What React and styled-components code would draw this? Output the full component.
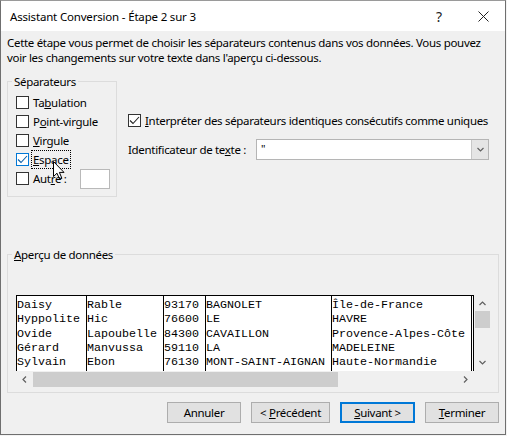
import React from 'react';
import styled, { createGlobalStyle } from 'styled-components';

const Global = createGlobalStyle`
  html, body { margin: 0; padding: 0; background: #f3f3f3; }
  body { font-family: "Noto Sans", "Liberation Sans", sans-serif; font-size: 11.5px; letter-spacing: -0.31px; color: #000; }
  * { box-sizing: border-box; }
`;

const Window = styled.div`
  width: 506px;
  height: 435px;
  border: 1px solid #6f6f6f;
  border-top-color: #9a9a9a;
  display: flex;
  flex-direction: column;
  background: #f0f0f0;
`;

const TitleBar = styled.div`
  height: 30px;
  background: #fff;
  display: flex;
  align-items: center;
  padding-left: 9px;
`;

const Title = styled.div`
  flex: 1;
  line-height: 15px;
  letter-spacing: -0.18px;
`;

const TitleButton = styled.div`
  width: 44px;
  height: 30px;
  display: flex;
  align-items: center;
  justify-content: center;
  font-size: 14px;
  color: #222;
`;

const Body = styled.div`
  flex: 1;
  display: flex;
  flex-direction: column;
  padding: 4px 6px 0 6px;
`;

const Description = styled.p`
  margin: 0;
  line-height: 15px;
`;

const Middle = styled.div`
  display: flex;
  align-items: flex-start;
  margin-top: 9px;
`;

const Group = styled.fieldset`
  margin: 0;
  border: 1px solid #dcdcdc;
  padding: ${p => p.$pad};
  width: ${p => p.$width};
  flex: none;
  min-width: 0;
`;

const Legend = styled.legend`
  padding: 0 2px;
  line-height: 15px;
`;

const CheckList = styled.div`
  display: flex;
  flex-direction: column;
  margin-left: 4px;
`;

const CheckRow = styled.label`
  position: relative;
  display: flex;
  align-items: center;
  height: 19px;
  gap: 4px;
`;

const Box = styled.span`
  width: 13px;
  height: 13px;
  border: 1px solid ${p => (p.$hot ? '#0078d7' : '#333')};
  background: #fff;
  display: flex;
  align-items: center;
  justify-content: center;
  flex: none;
`;

const Label = styled.span`
  line-height: 15px;
  white-space: nowrap;
  outline: ${p => (p.$focus ? '1px dotted #000' : 'none')};
  outline-offset: 1px;
`;

const SmallInput = styled.span`
  width: 30px;
  height: 20px;
  border: 1px solid #b9b9b9;
  background: #fff;
  margin-left: 9px;
  flex: none;
`;

const Cursor = styled.svg`
  position: absolute;
  left: 37px;
  top: 11px;
`;

const Options = styled.div`
  flex: 1;
  min-width: 0;
  display: flex;
  flex-direction: column;
  padding: 38.5px 10px 0 11px;
`;

const OptionRow = styled.div`
  display: flex;
  align-items: center;
  gap: 4px;
  height: 15px;
`;

const ComboRow = styled.div`
  display: flex;
  align-items: center;
  margin-top: 11px;
`;

const Combo = styled.div`
  margin-left: auto;
  width: 233px;
  height: 21px;
  display: flex;
  border: 1px solid #b5b5b5;
  background: #fff;
`;

const ComboText = styled.div`
  flex: 1;
  padding-left: 4px;
  line-height: 17px;
  font-size: 11px;
`;

const ComboButton = styled.div`
  width: 17px;
  background: #e5e5e5;
  border-left: 1px solid #c8c8c8;
  display: flex;
  align-items: center;
  justify-content: center;
`;

const PreviewGroup = styled(Group)`
  margin-top: 49.5px;
`;

const Preview = styled.div`
  margin-left: 4px;
  display: grid;
  grid-template-columns: 458px 17px;
  grid-template-rows: 76px 17px;
`;

const DataGrid = styled.div`
  display: flex;
  background: #fff;
  border: 1px solid #000;
  border-bottom: none;
  padding-right: 1px;
  overflow: hidden;
`;

const Column = styled.div`
  width: ${p => p.$w}px;
  flex: none;
  border-right: 1px solid #000;
  padding-top: 2.5px;
  font-family: "Liberation Mono", "Courier New", monospace;
  font-size: 11.67px;
  letter-spacing: 0;
  white-space: pre;
  overflow: hidden;
`;

const Cell = styled.div`
  line-height: 14.3px;
  height: 14.3px;
`;

const VScroll = styled.div`
  background: #f0f0f0;
  display: flex;
  flex-direction: column;
  align-items: center;
`;

const ArrowBox = styled.div`
  width: 17px;
  height: 17px;
  flex: none;
  display: flex;
  align-items: center;
  justify-content: center;
`;

const VThumb = styled.div`
  width: 15px;
  height: 17px;
  background: #cdcdcd;
  margin-top: -1px;
`;

const HScroll = styled.div`
  background: #f0f0f0;
  display: flex;
  align-items: center;
`;

const HThumb = styled.div`
  width: 305px;
  height: 15px;
  background: #cdcdcd;
`;

const Corner = styled.div`
  background: #f0f0f0;
`;

const Spacer = styled.div`
  flex: 1;
`;

const Buttons = styled.div`
  display: flex;
  justify-content: flex-end;
  gap: 10px;
  margin-bottom: 11px;
`;

const Button = styled.div`
  width: ${p => p.$w}px;
  height: 21px;
  background: #e1e1e1;
  border: ${p => (p.$default ? '2px solid #0078d7' : '1px solid #adadad')};
  display: flex;
  align-items: center;
  justify-content: center;
  line-height: 15px;
  white-space: pre;
`;

const Check = ({ color = '#222' }) => (
  <svg width="11" height="11" viewBox="0 0 11 11">
    <path d="M1 5.5 L4 8.5 L10 2" fill="none" stroke={color} strokeWidth="1.1" />
  </svg>
);

const Chevron = ({ dir = 'down', color = '#606060' }) => {
  const paths = {
    down: 'M1.5 3 L4.5 6 L7.5 3',
    up: 'M1.5 6 L4.5 3 L7.5 6',
    left: 'M6 1.5 L3 4.5 L6 7.5',
    right: 'M3 1.5 L6 4.5 L3 7.5',
  };
  return (
    <svg width="9" height="9" viewBox="0 0 9 9">
      <path d={paths[dir]} fill="none" stroke={color} strokeWidth="1.2" />
    </svg>
  );
};

const columns = [
  { w: 70, cells: ['Daisy', 'Hyppolite', 'Ovide', 'Gérard', 'Sylvain'] },
  { w: 77, cells: ['Rable', 'Hic', 'Lapoubelle', 'Manvussa', 'Ebon'] },
  { w: 42, cells: ['93170', '76600', '84300', '59110', '76130'] },
  { w: 126, cells: ['BAGNOLET', 'LE', 'CAVAILLON', 'LA', 'MONT-SAINT-AIGNAN'] },
  { w: 140, cells: ['Île-de-France', 'HAVRE', 'Provence-Alpes-Côte', 'MADELEINE', 'Haute-Normandie'] },
];

export default function App() {
  return (
    <>
      <Global />
      <Window>
        <TitleBar>
          <Title>Assistant Conversion - Étape 2 sur 3</Title>
          <TitleButton>?</TitleButton>
          <TitleButton>
            <svg width="11" height="11" viewBox="0 0 11 11">
              <path d="M0.5 0.5 L10.5 10.5 M10.5 0.5 L0.5 10.5" stroke="#222" strokeWidth="1" />
            </svg>
          </TitleButton>
        </TitleBar>
        <Body>
          <Description>
            Cette étape vous permet de choisir les séparateurs contenus dans vos données. Vous pouvez
            <br />
            voir les changements sur votre texte dans l'aperçu ci-dessous.
          </Description>
          <Middle>
            <Group $width="110px" $pad="4px 0 8px 4px">
              <Legend>Séparateurs</Legend>
              <CheckList>
                <CheckRow>
                  <Box />
                  <Label>Ta<u>b</u>ulation</Label>
                </CheckRow>
                <CheckRow>
                  <Box />
                  <Label>P<u>o</u>int-virgule</Label>
                </CheckRow>
                <CheckRow>
                  <Box />
                  <Label><u>V</u>irgule</Label>
                </CheckRow>
                <CheckRow>
                  <Box $hot>
                    <Check color="#0a5fa8" />
                  </Box>
                  <Label $focus><u>E</u>space</Label>
                  <Cursor width="13" height="20" viewBox="0 0 13 20">
                    <path
                      d="M0.5 0.5 L0.5 15.5 L4 12.2 L6.6 18.3 L8.9 17.3 L6.4 11.4 L11 11.4 Z"
                      fill="#fff"
                      stroke="#000"
                      strokeWidth="1"
                      strokeLinejoin="round"
                    />
                  </Cursor>
                </CheckRow>
                <CheckRow>
                  <Box />
                  <Label>Aut<u>r</u>e :</Label>
                  <SmallInput />
                </CheckRow>
              </CheckList>
            </Group>
            <Options>
              <OptionRow>
                <Box>
                  <Check />
                </Box>
                <Label><u>I</u>nterpréter des séparateurs identiques consécutifs comme uniques</Label>
              </OptionRow>
              <ComboRow>
                <Label>Identificateur de te<u>x</u>te :</Label>
                <Combo>
                  <ComboText>"</ComboText>
                  <ComboButton>
                    <Chevron dir="down" />
                  </ComboButton>
                </Combo>
              </ComboRow>
            </Options>
          </Middle>
          <PreviewGroup $width="100%" $pad="33px 0 4px 4px">
            <Legend><u>A</u>perçu de données</Legend>
            <Preview>
              <DataGrid>
                {columns.map((col, i) => (
                  <Column key={i} $w={col.w}>
                    {col.cells.map((c, j) => (
                      <Cell key={j}>{c}</Cell>
                    ))}
                  </Column>
                ))}
              </DataGrid>
              <VScroll>
                <ArrowBox>
                  <Chevron dir="up" />
                </ArrowBox>
                <VThumb />
                <Spacer />
                <ArrowBox>
                  <Chevron dir="down" />
                </ArrowBox>
              </VScroll>
              <HScroll>
                <ArrowBox>
                  <Chevron dir="left" />
                </ArrowBox>
                <HThumb />
                <Spacer />
                <ArrowBox>
                  <Chevron dir="right" />
                </ArrowBox>
              </HScroll>
              <Corner />
            </Preview>
          </PreviewGroup>
          <Spacer />
          <Buttons>
            <Button $w={74}><span>Annuler</span></Button>
            <Button $w={79}><span>&lt; <u>P</u>récédent</span></Button>
            <Button $w={75} $default><span><u>S</u>uivant &gt;</span></Button>
            <Button $w={74}><span><u>T</u>erminer</span></Button>
          </Buttons>
        </Body>
      </Window>
    </>
  );
}
